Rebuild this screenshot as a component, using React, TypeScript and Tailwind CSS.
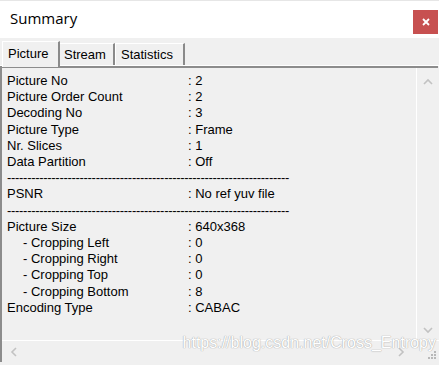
import React from "react";

type Row = { label?: string; value?: string; indent?: boolean; dash?: boolean };

const rows: Row[] = [
  { label: "Picture No", value: "2" },
  { label: "Picture Order Count", value: "2" },
  { label: "Decoding No", value: "3" },
  { label: "Picture Type", value: "Frame" },
  { label: "Nr. Slices", value: "1" },
  { label: "Data Partition", value: "Off" },
  { dash: true },
  { label: "PSNR", value: "No ref yuv file" },
  { dash: true },
  { label: "Picture Size", value: "640x368" },
  { label: "- Cropping Left", value: "0", indent: true },
  { label: "- Cropping Right", value: "0", indent: true },
  { label: "- Cropping Top", value: "0", indent: true },
  { label: "- Cropping Bottom", value: "8", indent: true },
  { label: "Encoding Type", value: "CABAC" },
];

const Chevron = ({ dir }: { dir: "up" | "down" | "left" | "right" }) => {
  const d = {
    up: "M1 6 L5 2 L9 6",
    down: "M1 2 L5 6 L9 2",
    left: "M6 1 L2 5 L6 9",
    right: "M2 1 L6 5 L2 9",
  }[dir];
  const w = dir === "up" || dir === "down" ? 10 : 8;
  const h = dir === "up" || dir === "down" ? 8 : 10;
  return (
    <svg width={w} height={h} viewBox={`0 0 ${w} ${h}`}>
      <path d={d} fill="none" stroke="#c2c2c2" strokeWidth="1.6" />
    </svg>
  );
};

export default function App() {
  return (
    <div
      className="w-[439px] h-[365px] bg-white flex flex-col overflow-hidden"
      style={{ fontFamily: "'Liberation Sans', Arial, sans-serif" }}
    >
      {/* title */}
      <div className="h-[38px] flex items-center justify-between pl-[10px] border-t border-[#e6e6e6]">
        <span className="text-[15px] text-black font-['Open_Sans',sans-serif] mt-[-2px]">Summary</span>
        <div className="w-[25px] h-[24px] bg-[#c75050] flex items-center justify-center mr-[1px] mt-[5px]">
          <svg width="8" height="8" viewBox="0 0 8 8">
            <path d="M1 1 L7 7 M7 1 L1 7" stroke="white" strokeWidth="1.8" />
          </svg>
        </div>
      </div>

      <div className="flex-1 bg-[#f0f0f0] flex flex-col">
        {/* tabs */}
        <div className="h-[27px] flex items-end pl-[2px] text-[13px] text-black">
          <div className="h-[26px] w-[58px] border-t border-l border-white border-r-2 border-r-[#8a8a8a] flex items-center pl-[5px] pb-[2px] z-10 bg-[#f0f0f0] mb-[-2px]">
            Picture
          </div>
          <div className="h-[22px] w-[55px] border-t border-white border-r-2 border-r-[#8a8a8a] flex items-center pl-[4px]">
            Stream
          </div>
          <div className="h-[22px] w-[70px] border-t border-l border-white border-r-2 border-r-[#8a8a8a] flex items-center pl-[5px]">
            Statistics
          </div>
        </div>

        {/* panel */}
        <div className="flex-1 flex flex-col border-t border-white mb-[3px]">
          <div className="h-[2px] bg-[#8c8c8c] mr-[1px]" />
          <div className="flex-1 flex flex-col border-l-2 border-[#8c8c8c] relative">
            <div className="flex-1 flex">
              <div className="flex-1 pt-[5px] pl-[5px] text-[13px] leading-[16.2px] text-black border-r border-white">
                {rows.map((r, i) =>
                  r.dash ? (
                    <div key={i} className="tracking-[-0.3px] whitespace-nowrap h-[16.2px]">
                      {"-".repeat(70)}
                    </div>
                  ) : (
                    <div key={i} className="flex whitespace-nowrap">
                      <span className={`w-[181px] ${r.indent ? "pl-[16px]" : ""}`}>{r.label}</span>
                      <span>: {r.value}</span>
                    </div>
                  )
                )}
              </div>
              <div className="w-[22px] flex flex-col items-center justify-between pt-[10px] pb-[6px]">
                <Chevron dir="up" />
                <Chevron dir="down" />
              </div>
            </div>
            <div className="h-[22px] border-t border-white flex items-center">
              <div className="flex-1 flex items-center justify-between pl-[8px] pr-[12px]">
                <Chevron dir="left" />
                <Chevron dir="right" />
              </div>
              <div className="w-[22px] h-full flex items-end justify-end pr-[2px] pb-[2px]">
                <svg width="9" height="9" viewBox="0 0 9 9">
                  <rect x="6" y="0" width="2" height="2" fill="#b8b8b8" />
                  <rect x="3" y="3" width="2" height="2" fill="#b8b8b8" />
                  <rect x="6" y="3" width="2" height="2" fill="#b8b8b8" />
                  <rect x="0" y="6" width="2" height="2" fill="#b8b8b8" />
                  <rect x="3" y="6" width="2" height="2" fill="#b8b8b8" />
                  <rect x="6" y="6" width="2" height="2" fill="#b8b8b8" />
                </svg>
              </div>
            </div>
            {/* watermark */}
            <div
              className="absolute right-[3px] bottom-[7px] text-[16px] text-white pointer-events-none"
              style={{ textShadow: "0 0 1px #a8a8a8, 0 0 1px #a8a8a8" }}
            >
              https://blog.csdn.net/Cross_Entropy
            </div>
          </div>
        </div>
      </div>
    </div>
  );
}
